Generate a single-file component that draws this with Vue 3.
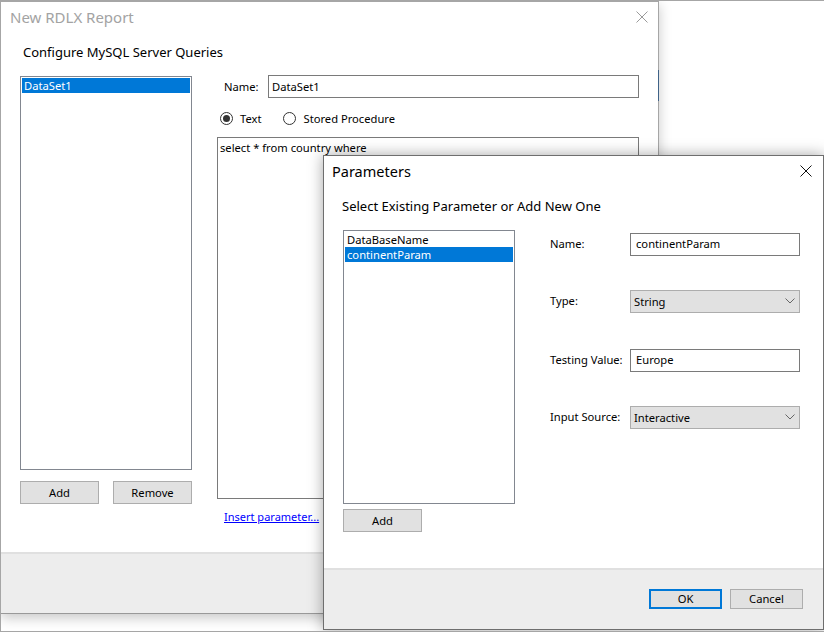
<template>
  <div class="frame">
    <div class="main">
      <div class="titlebar">
        <span class="title dim">New RDLX Report</span>
        <svg class="close" width="12" height="12" viewBox="0 0 12 12"><path d="M.5.5l11 11M11.5.5l-11 11" stroke="#9a9a9a" fill="none" /></svg>
      </div>
      <h3 class="heading main-heading">Configure MySQL Server Queries</h3>
      <div class="main-body">
        <div class="left-col">
          <div class="list main-list">
            <div class="item selected">DataSet1</div>
          </div>
          <div class="left-buttons">
            <button class="btn wide">Add</button>
            <button class="btn wide">Remove</button>
          </div>
        </div>
        <div class="right-col">
          <div class="name-row">
            <span>Name:</span>
            <div class="field">DataSet1</div>
          </div>
          <div class="radio-row">
            <label class="radio"><span class="dot on"></span>Text</label>
            <label class="radio"><span class="dot"></span>Stored Procedure</label>
          </div>
          <div class="query">select * from country where</div>
          <a class="insert" href="#">Insert parameter...</a>
        </div>
      </div>
      <div class="footer main-footer"></div>
    </div>
    <div class="main-edge"></div>

    <div class="params">
      <div class="titlebar params-bar">
        <span class="title">Parameters</span>
        <svg class="close" width="12" height="12" viewBox="0 0 12 12"><path d="M.5.5l11 11M11.5.5l-11 11" stroke="#111" fill="none" /></svg>
      </div>
      <h3 class="heading params-heading">Select Existing Parameter or Add New One</h3>
      <div class="params-body">
        <div class="params-left">
          <div class="list params-list">
            <div
              v-for="p in parameters"
              :key="p"
              class="item"
              :class="{ selected: p === current }"
            >{{ p }}</div>
          </div>
          <button class="btn wide">Add</button>
        </div>
        <div class="form">
          <template v-for="row in rows" :key="row.label">
            <span class="form-label">{{ row.label }}</span>
            <div v-if="row.select" class="field combo">
              {{ row.value }}
              <svg width="10" height="6" viewBox="0 0 10 6"><path d="M.5.5l4.5 4.5 4.5-4.5" stroke="#666" fill="none" /></svg>
            </div>
            <div v-else class="field">{{ row.value }}</div>
          </template>
        </div>
      </div>
      <div class="footer params-footer">
        <button class="btn action ok">OK</button>
        <button class="btn action">Cancel</button>
      </div>
    </div>
  </div>
</template>

<script setup>
const parameters = ["DataBaseName", "continentParam"]
const current = "continentParam"
const rows = [
  { label: "Name:", value: "continentParam" },
  { label: "Type:", value: "String", select: true },
  { label: "Testing Value:", value: "Europe" },
  { label: "Input Source:", value: "Interactive", select: true }
]
</script>

<style>
html, body {
  margin: 0;
  background: #fff;
}
</style>

<style scoped>
* {
  box-sizing: border-box;
}
.frame {
  position: relative;
  width: 824px;
  height: 632px;
  overflow: hidden;
  background: #fff;
  border: 1px solid #a6a6a6;
  border-right: none;
  font-family: "Noto Sans", "Open Sans", sans-serif;
  font-size: 11.2px;
  color: #000;
}
.main {
  display: flex;
  flex-direction: column;
  width: 658px;
  height: 613px;
  background: #fff;
  border-top: 1px solid #a6a6a6;
  border-right: 1px solid #a6a6a6;
  border-bottom: 1px solid #999;
  box-shadow: 0 4px 12px rgba(0, 0, 0, .22);
}
.main-edge {
  position: absolute;
  left: 657px;
  top: 69px;
  width: 1px;
  height: 31px;
  background: #3f6287;
}
.titlebar {
  display: flex;
  justify-content: space-between;
  align-items: center;
  flex: none;
}
.main .titlebar {
  height: 30px;
  padding: 0 10px 0 9px;
}
.title {
  font-size: 15px;
}
.params .title {
  font-size: 14.5px;
}
.dim {
  color: #a3a3a3;
}
.heading {
  margin: 0;
  font-size: 13px;
  font-weight: 400;
  line-height: 18px;
}
.main-heading {
  margin: 11px 0 0 22px;
}
.main-body {
  display: flex;
  flex: 1;
  padding: 15px 19px 0;
}
.left-col {
  display: flex;
  flex-direction: column;
  width: 172px;
}
.list {
  border: 1px solid #828790;
  padding: 1px;
  background: #fff;
}
.main-list {
  height: 394px;
}
.item {
  height: 15px;
  line-height: 15px;
  padding-left: 2px;
}
.selected {
  background: #0078d7;
  color: #fff;
}
.left-buttons {
  display: flex;
  justify-content: space-between;
  margin-top: 11px;
}
.btn {
  height: 23px;
  padding: 0 0 1px;
  background: #e1e1e1;
  border: 1px solid #adadad;
  font: inherit;
  color: #000;
}
.wide {
  width: 79px;
}
.right-col {
  display: flex;
  flex-direction: column;
  width: 422px;
  margin-left: 25px;
  margin-top: -1px;
}
.name-row {
  display: flex;
  align-items: center;
  justify-content: space-between;
  padding-left: 7px;
}
.field {
  display: flex;
  align-items: center;
  height: 23px;
  padding: 0 0 1px 5px;
  background: #fff;
  border: 1px solid #7a7a7a;
}
.name-row .field {
  width: 371px;
  padding-left: 3px;
}
.radio-row {
  display: flex;
  align-items: center;
  gap: 22px;
  height: 18px;
  margin-top: 11px;
  padding-left: 3px;
}
.radio {
  display: flex;
  align-items: center;
  gap: 7px;
}
.dot {
  position: relative;
  width: 13px;
  height: 13px;
  border: 1px solid #333;
  border-radius: 50%;
}
.dot.on::after {
  content: "";
  position: absolute;
  left: 2px;
  top: 2px;
  width: 7px;
  height: 7px;
  border-radius: 50%;
  background: #333;
}
.query {
  height: 362px;
  margin-top: 10px;
  padding: 1px 2px;
  border: 1px solid #7a7a7a;
  line-height: 17px;
}
.insert {
  align-self: flex-start;
  margin: 10px 0 0 7px;
  font-size: 11px;
  color: #0000ff;
}
.footer {
  flex: none;
  background: #ededed;
  border-top: 2px solid #e0e0e0;
}
.main-footer {
  height: 61px;
}
.params {
  position: absolute;
  left: 322px;
  top: 154px;
  display: flex;
  flex-direction: column;
  width: 501px;
  height: 475px;
  background: #fff;
  border: 1px solid #6e6e6e;
  box-shadow: 0 0 14px rgba(0, 0, 0, .35);
}
.params .params-bar {
  height: 30px;
  padding: 0 11px 0 8px;
}
.params-heading {
  margin: 11px 0 0 18px;
}
.params-body {
  display: flex;
  flex: 1;
  padding: 15px 0 0 19px;
}
.params-left {
  display: flex;
  flex-direction: column;
  gap: 5px;
  width: 172px;
}
.params-list {
  height: 274px;
}
.form {
  display: grid;
  grid-template-columns: 80px 170px;
  grid-template-rows: 57px 59px 57px 23px;
  align-items: start;
  margin: 3px 0 0 35px;
}
.form-label {
  line-height: 21px;
}
.form .field {
  padding-bottom: 2px;
}
.form .combo {
  justify-content: space-between;
  padding: 0 4px 1px 3px;
  background: #e1e1e1;
  border-color: #adadad;
}
.params-footer {
  display: flex;
  justify-content: flex-end;
  gap: 8px;
  height: 61px;
  padding: 19px 20px 0 0;
}
.action {
  width: 73px;
  height: 20px;
}
.ok {
  border: 2px solid #0078d7;
}
</style>
